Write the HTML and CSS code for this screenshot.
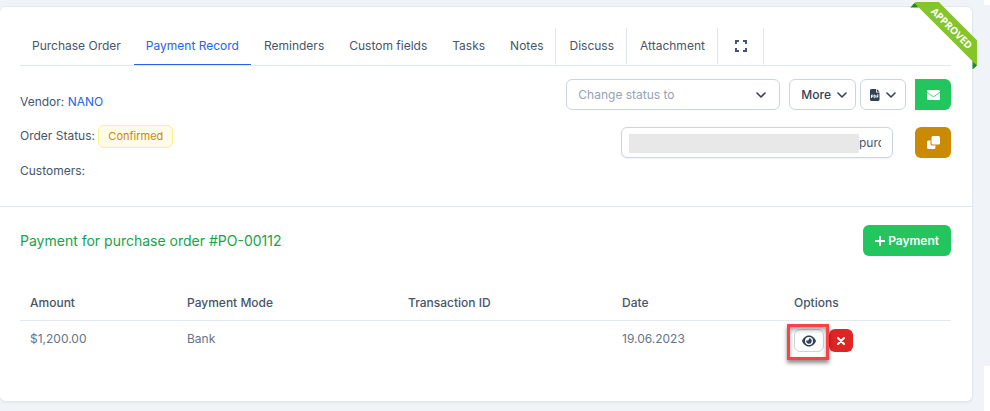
FILE: index.html
```html
<!DOCTYPE html>
<html lang="en">
<head>
    <meta charset="UTF-8">
    <meta name="viewport" content="width=device-width, initial-scale=1.0">
    <title>Purchase Order</title>
    <link rel="stylesheet" href="styles.css">
</head>
<body>
    <div class="page">
        <main class="panel">
            <div class="ribbon"><span>Approved</span></div>

            <nav class="tabs">
                <a href="#order">Purchase Order</a>
                <a href="#payments" class="active">Payment Record</a>
                <a href="#reminders">Reminders</a>
                <a href="#fields">Custom fields</a>
                <a href="#tasks">Tasks</a>
                <a href="#notes" class="separated">Notes</a>
                <a href="#discuss" class="separated">Discuss</a>
                <a href="#attachment" class="separated">Attachment</a>
                <a href="#full" class="separated tab-icon" aria-label="Toggle full view">
                    <svg width="12" height="12" viewBox="0 0 12 12" fill="none" stroke="currentColor" stroke-width="2">
                        <path d="M1 4V1h3M8 1h3v3M11 8v3H8M4 11H1V8"/>
                    </svg>
                </a>
            </nav>

            <section class="summary">
                <div class="details">
                    <p>Vendor: <a href="#vendor">NANO</a></p>
                    <p>Order Status: <span class="badge">Confirmed</span></p>
                    <p>Customers:</p>
                </div>
                <div class="actions">
                    <div class="action-row">
                        <div class="select-wrap">
                            <select aria-label="Change status to">
                                <option>Change status to</option>
                            </select>
                            <svg class="chevron" width="10" height="6" viewBox="0 0 10 6"><path d="M1 1l4 4 4-4"/></svg>
                        </div>
                        <div class="btn-group">
                            <button type="button" class="btn btn-default">More
                                <svg class="chevron" width="10" height="6" viewBox="0 0 10 6"><path d="M1 1l4 4 4-4"/></svg>
                            </button>
                            <button type="button" class="btn btn-default btn-pdf" aria-label="PDF">
                                <svg width="10" height="12" viewBox="0 0 10 12">
                                    <path fill="#334155" d="M1.500 0H6v3.500h3.500v7A1.500 1.500 0 0 1 8 12H1.500A1.500 1.500 0 0 1 0 10.500v-9A1.500 1.500 0 0 1 1.500 0zM6.800 0l2.700 2.700H6.800z"/>
                                    <path fill="none" stroke="#fff" stroke-width=".9" d="M1.500 9V6h.8a.8.8 0 0 1 0 1.700h-.8M4.200 6v2.700h.4c1.300 0 1.300-2.700 0-2.700zM7 9V6h1.600M7 7.500h1.300"/>
                                </svg>
                                <svg class="chevron" width="10" height="6" viewBox="0 0 10 6"><path d="M1 1l4 4 4-4"/></svg>
                            </button>
                        </div>
                        <button type="button" class="btn btn-icon btn-success btn-mail" aria-label="Send email">
                            <svg width="13" height="10" viewBox="0 0 13 10">
                                <rect width="13" height="10" rx="1.200" fill="#fff"/>
                                <path d="M0 2.200l5.700 4.200q.8.600 1.600 0L13 2.200" fill="none" stroke="#22c55e" stroke-width=".8"/>
                            </svg>
                        </button>
                    </div>
                    <div class="action-row">
                        <div class="link-wrap">
                            <input type="text" aria-label="Public link" value="purchase">
                            <span class="redacted"></span>
                        </div>
                        <button type="button" class="btn btn-icon btn-warning" aria-label="Copy link">
                            <svg width="13" height="13" viewBox="0 0 13 13" fill="#fff">
                                <rect x="4.500" width="8.500" height="8.500" rx="1.500"/>
                                <path d="M1.500 4.500h2V8a1.600 1.600 0 0 0 1.600 1.600h3.400v1.900A1.500 1.500 0 0 1 7 13H1.500A1.500 1.500 0 0 1 0 11.500V6a1.500 1.500 0 0 1 1.500-1.500z"/>
                            </svg>
                        </button>
                    </div>
                </div>
            </section>

            <section class="payments">
                <div class="payments-head">
                    <h4>Payment for purchase order #PO-00112</h4>
                    <button type="button" class="btn btn-success btn-add">
                        <svg width="10" height="10" viewBox="0 0 10 10"><path d="M5 0v10M0 5h10" stroke="#fff" stroke-width="2"/></svg>
                        Payment
                    </button>
                </div>
                <table>
                    <colgroup>
                        <col class="col-amount">
                        <col class="col-mode">
                        <col class="col-transaction">
                        <col class="col-date">
                        <col>
                    </colgroup>
                    <thead>
                        <tr>
                            <th>Amount</th>
                            <th>Payment Mode</th>
                            <th>Transaction ID</th>
                            <th>Date</th>
                            <th>Options</th>
                        </tr>
                    </thead>
                    <tbody>
                        <tr>
                            <td>$1,200.00</td>
                            <td>Bank</td>
                            <td></td>
                            <td>19.06.2023</td>
                            <td>
                                <div class="options">
                                    <button type="button" class="btn btn-default btn-view" aria-label="View">
                                        <svg width="14" height="12" viewBox="0 0 14 12">
                                            <path fill="#334155" fill-rule="evenodd" d="M7 .5c3.500 0 6 2.700 7 5.500-1 2.800-3.500 5.500-7 5.500S1 8.800 0 6C1 3.200 3.500.5 7 .5zM7 2a4 4 0 1 0 0 8 4 4 0 0 0 0-8z"/>
                                            <path fill="#334155" d="M7 3.300A2.700 2.700 0 1 1 4.400 5.300 1.800 1.800 0 0 0 7 3.300z"/>
                                        </svg>
                                    </button>
                                    <button type="button" class="btn btn-danger" aria-label="Delete">
                                        <svg width="8" height="8" viewBox="0 0 8 8"><path d="M1 1l6 6M7 1L1 7" stroke="#fff" stroke-width="2" stroke-linecap="round"/></svg>
                                    </button>
                                </div>
                            </td>
                        </tr>
                    </tbody>
                </table>
            </section>
        </main>
    </div>
    <div class="edge"></div>
</body>
</html>
```

FILE: styles.css
```css
*,
*::before,
*::after {
    box-sizing: border-box;
}

body {
    display: flex;
    min-height: 100vh;
    margin: 0;
    font-family: 'Inter', sans-serif;
    font-size: 12px;
    line-height: 20px;
    color: #475569;
    background: #fff;
}

a {
    color: #2563eb;
    text-decoration: none;
}

.page {
    flex: 1;
    padding: 6px 11px 9px 0;
    background: #f0f4f9;
}

.edge {
    width: 6px;
    margin: 5px 0 45px;
    background: #f0f4f9;
}

/* Panel */
.panel {
    position: relative;
    height: 100%;
    border: 1px solid #e2e8f0;
    border-left: none;
    border-radius: 6px;
    background: #fff;
    box-shadow: 0 1px 2px rgba(0, 0, 0, 0.05);
}

/* Corner ribbon */
.ribbon {
    position: absolute;
    top: -5px;
    right: -5px;
    width: 67px;
    height: 67px;
    overflow: hidden;
}

.ribbon span {
    position: absolute;
    top: 17px;
    right: -19px;
    width: 88px;
    transform: rotate(45deg);
    background: #84c529;
    color: #fff;
    font-family: 'Open Sans', sans-serif;
    font-size: 10px;
    font-weight: 700;
    line-height: 18px;
    text-align: center;
    text-transform: uppercase;
}

.ribbon span::before,
.ribbon span::after {
    content: "";
    position: absolute;
    top: 100%;
    border: 3px solid transparent;
    border-top-color: #1e8a2c;
}

.ribbon span::before {
    left: 0;
    border-left-color: #1e8a2c;
}

.ribbon span::after {
    right: 0;
    border-right-color: #1e8a2c;
}

/* Tabs */
.tabs {
    display: flex;
    gap: 1px;
    margin: 21px 21px 0 20px;
    border-bottom: 1px solid #e2e8f0;
}

.tabs a {
    padding: 8px 12px;
    border-bottom: 1px solid transparent;
    color: #475569;
}

.tabs a.active {
    color: #2563eb;
    border-bottom-color: #2563eb;
}

.tabs a.separated {
    border-right: 1px solid #e2e8f0;
}

.tabs .tab-icon {
    display: flex;
    align-items: center;
    padding: 0 16px;
}

/* Order details and actions */
.summary {
    display: flex;
    justify-content: space-between;
    padding: 13px 21px 25px 20px;
    border-bottom: 1px solid #e2e8f0;
}

.details {
    padding-top: 13px;
}

.details p {
    margin: 0 0 13px;
}

.details p:last-child {
    margin: 0;
}

.badge {
    display: inline-block;
    padding: 0 9px;
    border: 1px solid #fef08a;
    border-radius: 6px;
    background: #fefce8;
    color: #ca8a04;
    font-size: 11px;
    line-height: 21px;
}

.actions {
    display: flex;
    flex-direction: column;
    gap: 17px;
}

.action-row {
    display: flex;
    justify-content: flex-end;
    gap: 9px;
}

.btn-group {
    display: flex;
    gap: 4px;
}

.chevron {
    fill: none;
    stroke: #334155;
    stroke-width: 1.6;
    stroke-linecap: round;
    stroke-linejoin: round;
}

.select-wrap,
.link-wrap {
    position: relative;
}

.select-wrap select {
    appearance: none;
    width: 214px;
    height: 31px;
    padding: 0 11px;
    border: 1px solid #cbd5e1;
    border-radius: 6px;
    background: #fff;
    color: #94a3b8;
    font: inherit;
}

.select-wrap .chevron {
    position: absolute;
    top: 13px;
    right: 14px;
}

.link-wrap {
    margin-right: 13px;
}

.link-wrap input {
    width: 272px;
    height: 31px;
    padding: 0 11px 0 237px;
    border: 1px solid #cbd5e1;
    border-radius: 6px;
    color: #475569;
    font: inherit;
    box-shadow: 0 1px 2px rgba(0, 0, 0, 0.05);
}

.redacted {
    position: absolute;
    top: 7px;
    left: 8px;
    width: 230px;
    height: 19px;
    background: #e8e8e8;
}

/* Buttons */
.btn {
    display: inline-flex;
    justify-content: center;
    align-items: center;
    height: 31px;
    padding: 0 11px;
    border: 1px solid transparent;
    border-radius: 6px;
    color: #fff;
    font: inherit;
    font-weight: 500;
    cursor: pointer;
}

.btn-default {
    gap: 6px;
    padding: 0 8px 0 11px;
    border-color: #cbd5e1;
    background: #fff;
    color: #334155;
}

.btn-pdf {
    padding: 0 9px;
}

.btn-icon {
    width: 36px;
    padding: 0;
}

.btn-success {
    background: #22c55e;
}

.btn-mail {
    border-top-left-radius: 0;
    border-bottom-left-radius: 0;
}

.btn-warning {
    background: #ca8a04;
}

.btn-add {
    gap: 3px;
    font-weight: 600;
}

/* Payments */
.payments {
    padding: 18px 21px 40px 20px;
}

.payments-head {
    display: flex;
    justify-content: space-between;
    align-items: center;
    margin-bottom: 28px;
}

.payments-head h4 {
    margin: 0;
    color: #16a34a;
    font-size: 14px;
    font-weight: 400;
}

table {
    width: 100%;
    border-collapse: collapse;
    table-layout: fixed;
}

.col-amount {
    width: 157px;
}

.col-mode {
    width: 221px;
}

.col-transaction {
    width: 214px;
}

.col-date {
    width: 172px;
}

th {
    padding: 9px 10px 7px;
    border-bottom: 1px solid #e2e8f0;
    font-weight: 500;
    text-align: left;
}

td {
    padding: 8px 10px;
    color: #64748b;
    vertical-align: top;
}

.options {
    display: flex;
    gap: 5px;
    position: relative;
}

.options .btn {
    width: 24px;
    height: 23px;
    padding: 0;
}

.options .btn-view {
    width: 30px;
}

.btn-danger {
    background: #dc2626;
}

/* Highlight frame around the view button */
.options::before {
    content: "";
    position: absolute;
    top: -5px;
    left: -7px;
    width: 42px;
    height: 36px;
    border: 3px solid #fa4147;
    box-shadow: 0 3px 4px rgba(0, 0, 0, 0.45), inset 0 3px 4px rgba(0, 0, 0, 0.35);
    pointer-events: none;
}
```
